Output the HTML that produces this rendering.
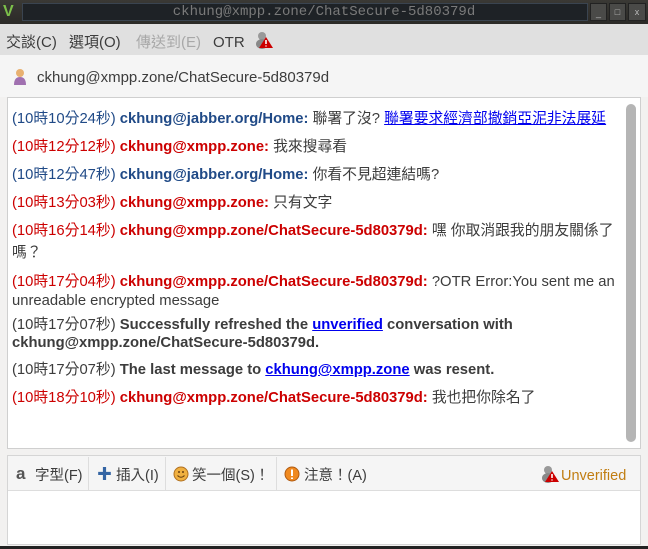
<!DOCTYPE html>
<html><head><meta charset="utf-8"><style>
*{margin:0;padding:0;box-sizing:border-box}
body{width:648px;height:549px;background:#f2f1f0;font-family:"Liberation Sans","Noto Sans CJK TC",sans-serif;font-size:14.8px;color:#3c3c3c;position:relative;overflow:hidden}
.ab{position:absolute;white-space:nowrap;line-height:18px}
#title{left:0;top:0;width:648px;height:24px;background:linear-gradient(#3a3935,#2b2a27);}
#ttext{left:0;top:3px;width:648px;text-align:center;font-family:"Liberation Mono",monospace;font-size:14px;color:#7a7a7a}
#menu{left:0;top:24px;width:648px;height:31px;background:#e0e0e0}
.blue{color:#204a87}.red{color:#cc0000}
b{font-weight:bold}
a{color:#0000ee;text-decoration:underline}
.l{left:12px}
</style></head><body>
<div id="title" class="ab"></div>
<div class="ab" style="left:3px;top:3px;width:17px;height:17px;font:bold 16px 'Liberation Sans';color:#7cc04a">V</div>
<div class="ab" style="left:22px;top:3px;width:566px;height:18px;background:#1e2226;border:1px solid #3a4450"></div>
<div id="ttext" class="ab">ckhung@xmpp.zone/ChatSecure-5d80379d</div>
<div class="ab" style="left:590px;top:3px;width:17px;height:18px;background:#4a4a48;border:1px solid #222;color:#bbb;font-size:9px;text-align:center;line-height:18px">_</div>
<div class="ab" style="left:609px;top:3px;width:17px;height:18px;background:#4a4a48;border:1px solid #222;color:#bbb;font-size:9px;text-align:center;line-height:16px">□</div>
<div class="ab" style="left:628px;top:3px;width:18px;height:18px;background:#4a4a48;border:1px solid #222;color:#bbb;font-size:9px;text-align:center;line-height:16px">x</div>
<div id="menu" class="ab"></div>
<div class="ab" style="left:6px;top:34px;font-size:15px;color:#3c3c3c">交談(C)</div>
<div class="ab" style="left:69px;top:34px;font-size:15px;color:#3c3c3c">選項(O)</div>
<div class="ab" style="left:136px;top:34px;font-size:15px;color:#a8a8a8">傳送到(E)</div>
<div class="ab" style="left:213px;top:34px;font-size:15px;color:#3c3c3c">OTR</div>
<svg class="ab" style="left:255px;top:31px" width="18" height="18"><circle cx="7" cy="5" r="4" fill="#999"/><ellipse cx="7" cy="13" rx="6" ry="5" fill="#888"/><path d="M11 6 L18 17 L4 17 Z" fill="#c00"/><path d="M11 9 v4 M11 14.5v1" stroke="#fff" stroke-width="1.6"/></svg>
<div class="ab" style="left:0;top:55px;width:648px;height:42px;background:#f5f5f5"></div>
<svg class="ab" style="left:12px;top:68px" width="16" height="18"><circle cx="8" cy="5" r="4" fill="#e8b070"/><path d="M2 17 Q2 9 8 9 Q14 9 14 17Z" fill="#a070b0"/></svg>
<div class="ab" style="left:37px;top:69px;font-size:15px;color:#3c3c3c">ckhung@xmpp.zone/ChatSecure-5d80379d</div>
<div class="ab" style="left:7px;top:97px;width:634px;height:352px;background:#fff;border:1px solid #cfcfcf"></div>
<div class="ab" style="left:626px;top:104px;width:10px;height:338px;background:#b5b5b5;border-radius:5px"></div>
<div class="ab l" style="top:110px"><span class="blue">(10時10分24秒) <b>ckhung@jabber.org/Home:</b></span> 聯署了沒? <a>聯署要求經濟部撤銷亞泥非法展延</a></div>
<div class="ab l" style="top:138px"><span class="red">(10時12分12秒) <b>ckhung@xmpp.zone:</b></span> 我來搜尋看</div>
<div class="ab l" style="top:166px"><span class="blue">(10時12分47秒) <b>ckhung@jabber.org/Home:</b></span> 你看不見超連結嗎?</div>
<div class="ab l" style="top:194px"><span class="red">(10時13分03秒) <b>ckhung@xmpp.zone:</b></span> 只有文字</div>
<div class="ab l" style="top:222px"><span class="red">(10時16分14秒) <b>ckhung@xmpp.zone/ChatSecure-5d80379d:</b></span> 嘿 你取消跟我的朋友關係了</div>
<div class="ab l" style="top:244px">嗎？</div>
<div class="ab l" style="top:273px"><span class="red">(10時17分04秒) <b>ckhung@xmpp.zone/ChatSecure-5d80379d:</b></span> ?OTR Error:You sent me an</div>
<div class="ab l" style="top:292px">unreadable encrypted message</div>
<div class="ab l" style="top:316px">(10時17分07秒) <b>Successfully refreshed the <a>unverified</a> conversation with</b></div>
<div class="ab l" style="top:334px"><b>ckhung@xmpp.zone/ChatSecure-5d80379d.</b></div>
<div class="ab l" style="top:361px">(10時17分07秒) <b>The last message to <a>ckhung@xmpp.zone</a> was resent.</b></div>
<div class="ab l" style="top:389px"><span class="red">(10時18分10秒) <b>ckhung@xmpp.zone/ChatSecure-5d80379d:</b></span> 我也把你除名了</div>
<div class="ab" style="left:7px;top:455px;width:634px;height:90px;background:#fff;border:1px solid #d5d5d5"></div>
<div class="ab" style="left:8px;top:456px;width:632px;height:35px;background:#f5f5f5;border-bottom:1px solid #ddd"></div>
<div class="ab" style="left:88px;top:457px;width:1px;height:33px;background:#ddd"></div>
<div class="ab" style="left:165px;top:457px;width:1px;height:33px;background:#ddd"></div>
<div class="ab" style="left:276px;top:457px;width:1px;height:33px;background:#ddd"></div>
<div class="ab" style="left:16px;top:465px;font-size:17px;color:#555;font-weight:bold">a</div>
<div class="ab" style="left:35px;top:467px;font-size:14.5px">字型(F)</div>
<div class="ab" style="left:97px;top:466px;font-size:15px;color:#3465a4;font-weight:bold">✚</div>
<div class="ab" style="left:116px;top:467px;font-size:14.5px">插入(I)</div>
<svg class="ab" style="left:173px;top:466px" width="16" height="16"><circle cx="8" cy="8" r="7" fill="#f0b040" stroke="#b07020"/><path d="M4.5 9.5 Q8 13 11.5 9.5" stroke="#6a4010" fill="none"/><circle cx="6" cy="6" r="1" fill="#6a4010"/><circle cx="10" cy="6" r="1" fill="#6a4010"/></svg>
<div class="ab" style="left:192px;top:467px;font-size:14.5px">笑一個(S)！</div>
<svg class="ab" style="left:284px;top:466px" width="16" height="16"><circle cx="8" cy="8" r="7" fill="#f08a20" stroke="#b05a10"/><path d="M8 3.5v6.5M8 11.5v1.5" stroke="#fff" stroke-width="2"/></svg>
<div class="ab" style="left:304px;top:467px;font-size:14.5px">注意！(A)</div>
<svg class="ab" style="left:541px;top:465px" width="18" height="18"><circle cx="7" cy="5" r="4" fill="#999"/><ellipse cx="7" cy="13" rx="6" ry="5" fill="#888"/><path d="M11 6 L18 17 L4 17 Z" fill="#c00"/><path d="M11 9 v4 M11 14.5v1" stroke="#fff" stroke-width="1.6"/></svg>
<div class="ab" style="left:561px;top:467px;font-size:14.5px;color:#c17d11">Unverified</div>
<div class="ab" style="left:0;top:546px;width:648px;height:3px;background:#222"></div>
</body></html>
